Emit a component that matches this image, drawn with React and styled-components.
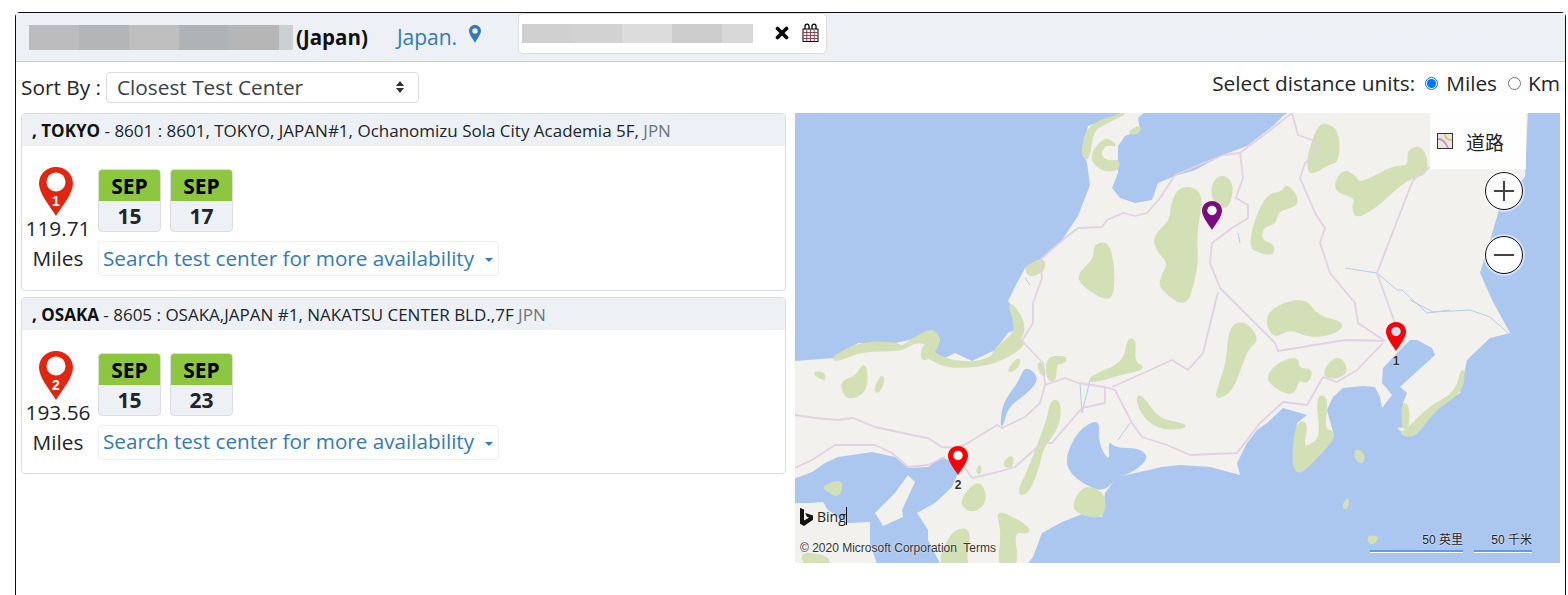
import React from 'react';
import styled, { createGlobalStyle } from 'styled-components';

const Global = createGlobalStyle`
  html, body { margin: 0; padding: 0; background: #fff; }
  body { font-family: "Open Sans", "Noto Sans", Arial, sans-serif; color: #212529; }
  * { box-sizing: border-box; }
`;

const Page = styled.div`
  width: 1568px;
  height: 595px;
  padding: 12px 2px 0 15px;
  overflow: hidden;
`;

const Frame = styled.div`
  height: 600px;
  border: 1.5px solid #111;
  border-bottom: none;
  border-radius: 5px 5px 0 0;
`;

const Header = styled.div`
  height: 49px;
  background: #edf1f5;
  border-bottom: 1px solid #ccd0d4;
  display: flex;
  align-items: flex-start;
  padding-left: 13px;
`;

const Redacted = styled.div`
  display: flex;
  margin-top: ${(p) => p.$top}px;
  height: ${(p) => p.$h}px;
`;

const Blur = styled.span`
  width: ${(p) => p.$w}px;
  background: ${(p) => p.$c};
`;

const CountryName = styled.span`
  font-size: 20.5px;
  font-weight: 700;
  line-height: 26px;
  margin: 11px 0 0 3px;
  color: #111;
`;

const CountryLink = styled.a`
  font-size: 21px;
  line-height: 26px;
  color: #337ab7;
  margin: 11px 0 0 29px;
`;

const PinLink = styled.svg`
  width: 12px;
  height: 18px;
  margin: 12px 0 0 12px;
`;

const DateBox = styled.div`
  width: 309px;
  height: 41px;
  margin: 0 0 0 37px;
  background: #fff;
  border: 1px solid #ddd;
  border-radius: 5px;
  display: flex;
  align-items: flex-start;
  padding-left: 3px;
`;

const ClearIcon = styled.svg`
  width: 14px;
  height: 14px;
  margin: 12px 0 0 22px;
`;

const CalendarIcon = styled.svg`
  width: 17px;
  height: 19px;
  margin: 9px 0 0 13px;
`;

const Toolbar = styled.div`
  display: flex;
  justify-content: space-between;
  height: 51px;
  padding: 10px 5px 0 5px;
`;

const SortGroup = styled.div`
  display: flex;
  align-items: center;
  height: 31px;
`;

const Label = styled.span`
  font-size: 20.8px;
  line-height: 31px;
  color: #212529;
`;

const SortSelect = styled.div`
  width: 313px;
  height: 31px;
  margin-left: 5px;
  border: 1px solid #ddd;
  border-radius: 4px;
  padding: 0 13px 2px 10px;
  display: flex;
  align-items: center;
  justify-content: space-between;
  font-size: 20.8px;
  color: #3b4147;
`;

const UnitsGroup = styled.div`
  display: flex;
  align-items: center;
  height: 22px;
`;

const Radio = styled.span`
  width: 13px;
  height: 13px;
  border-radius: 50%;
  margin: 0 ${(p) => p.$after}px 0 ${(p) => p.$gap}px;
  background: #fff;
  border: 1px solid ${(p) => (p.$on ? '#0075ff' : '#767676')};
  display: flex;
  align-items: center;
  justify-content: center;
  &::after {
    content: '';
    width: 9px;
    height: 9px;
    border-radius: 50%;
    background: ${(p) => (p.$on ? '#0075ff' : 'transparent')};
  }
`;

const Content = styled.div`
  display: grid;
  grid-template-columns: 765px 765px;
  column-gap: 9px;
  padding-left: 5px;
`;

const List = styled.div`
  display: flex;
  flex-direction: column;
  gap: 6px;
`;

const Card = styled.div`
  height: 177.5px;
  border: 1px solid #ddd;
  border-radius: 4px;
  overflow: hidden;
`;

const CardTitle = styled.div`
  height: 32px;
  background: #edf1f5;
  padding-left: 10px;
  font-size: 17px;
  line-height: 34px;
  color: #212529;
  white-space: nowrap;
  b { color: #111; }
  span { color: #6c757d; }
`;

const CardBody = styled.div`
  display: flex;
  padding: 21px 0 0 5px;
`;

const Distance = styled.div`
  width: 62px;
  margin-right: 9px;
  display: flex;
  flex-direction: column;
  align-items: center;
  font-size: 20.8px;
  line-height: 30px;
  color: #212529;
  white-space: nowrap;
  svg { width: 34px; height: 49px; margin: 0 4px -3px 0; }
`;

const Slots = styled.div`
  display: flex;
  flex-direction: column;
  gap: 9px;
  padding-top: 2px;
`;

const Tiles = styled.div`
  display: flex;
  gap: 9px;
`;

const Tile = styled.div`
  width: 63px;
  height: 63px;
  border: 1px solid #ddd;
  border-radius: 4px;
  background: #edf1f5;
  overflow: hidden;
  text-align: center;
  font-weight: 700;
  font-size: 21px;
  color: #212529;
`;

const TileMonth = styled.div`
  height: 31px;
  background: #8dc63f;
  color: #000;
  line-height: 33px;
`;

const TileDay = styled.div`
  line-height: 30px;
`;

const MoreButton = styled.div`
  width: 401px;
  height: 35px;
  border: 1px solid #eee;
  border-radius: 4px;
  padding: 0 5px 2px 4px;
  display: flex;
  align-items: center;
  justify-content: space-between;
  font-size: 20.7px;
  color: #337ab7;
  white-space: nowrap;
  &::after {
    content: '';
    border-left: 4px solid transparent;
    border-right: 4px solid transparent;
    border-top: 4px solid #337ab7;
    margin-top: 5px;
  }
`;

const MapBox = styled.div`
  position: relative;
  width: 765px;
  height: 450px;
  background: #abc7f0;
  overflow: hidden;
  svg.base { display: block; filter: blur(0.4px); }
`;

const LayerButton = styled.div`
  position: absolute;
  top: 0;
  right: 34px;
  width: 96px;
  height: 56px;
  background: rgba(255, 255, 255, 0.92);
  display: flex;
  align-items: center;
  padding-left: 7px;
  gap: 13px;
  font-family: "Noto Sans CJK SC", sans-serif;
  font-size: 19px;
  color: #222;
`;

const ZoomButton = styled.div`
  position: absolute;
  left: 690px;
  top: ${(p) => p.$top}px;
  width: 38px;
  height: 38px;
  border-radius: 50%;
  background: #fff;
  border: 1.5px solid #111;
  box-shadow: 0 0 0 2px rgba(255, 255, 255, 0.45);
  display: flex;
  align-items: center;
  justify-content: center;
`;

const Marker = styled.svg`
  position: absolute;
  left: ${(p) => p.$x}px;
  top: ${(p) => p.$y}px;
  width: 20px;
  height: 29px;
`;

const MarkerLabel = styled.span`
  position: absolute;
  left: ${(p) => p.$x}px;
  top: ${(p) => p.$y}px;
  width: 20px;
  text-align: center;
  font-family: "Liberation Sans", Arial, sans-serif;
  font-size: 12px;
  font-weight: 700;
  line-height: 14px;
  color: #333;
  text-shadow: 0 0 2px #fff;
`;

const BingMark = styled.div`
  position: absolute;
  left: 5px;
  top: 394px;
  display: flex;
  align-items: center;
  gap: 4px;
  font-family: "Open Sans", sans-serif;
  font-size: 14px;
  color: #222;
  &::after {
    content: '';
    position: absolute;
    right: -1px;
    top: 0;
    height: 18px;
    width: 1px;
    background: #111;
  }
`;

const Copyright = styled.div`
  position: absolute;
  left: 5px;
  top: 428px;
  font-family: "Liberation Sans", Arial, sans-serif;
  font-size: 12px;
  line-height: 14px;
  color: #333;
  text-shadow: 0 0 2px #fff;
  white-space: pre;
`;

const Scale = styled.div`
  position: absolute;
  left: ${(p) => p.$x}px;
  top: 419px;
  width: ${(p) => p.$w}px;
  height: 20px;
  border-bottom: 2px solid #5a9cf0;
  box-shadow: 0 1px 0 #fff;
  text-align: right;
  font-family: "Liberation Sans", "Noto Sans CJK SC", sans-serif;
  font-size: 12px;
  line-height: 17px;
  color: #222;
  text-shadow: 0 0 2px #fff;
`;

const land = [
  '0,248 40,245 63,230 100,230 115,227 137,217 145,227 138,240 150,245 160,240 177,248 200,237 213,220 220,217 227,207 213,188 222,170 230,155 245,147 267,127 283,103 295,72 292,50 287,38 293,13 325,2 330,-4 353,-4 343,5 345,17 330,23 323,33 323,60 317,75 325,85 340,90 357,87 363,70 380,63 400,57 428,42 452,33 478,13 488,3 498,-4 733,-4 730,64 705,90 702,104 685,160 697,187 715,220 695,225 672,247 665,280 638,297 620,322 608,320 602,315 612,314 608,290 612,280 605,274 618,262 640,242 637,235 622,227 615,227 605,237 588,255 587,270 597,282 587,295 585,284 580,274 568,273 548,275 538,284 532,297 538,319 530,330 512,354 502,359 498,347 502,310 512,302 488,295 472,310 462,317 452,330 442,350 445,362 415,354 385,352 367,354 322,364 310,380 307,404 290,400 267,409 247,420 238,444 230,454 147,454 133,427 133,417 122,400 140,390 157,374 163,360 157,349 147,344 133,354 113,355 100,344 77,339 43,344 30,350 17,359 -4,367 -4,248',
  '-4,390 15,390 28,389 33,397 53,410 75,409 75,430 83,454 -4,454',
  '113,362 120,369 107,397 108,404 88,413 80,400 100,380'
];

const water = [
  '270,345 283,317 305,305 303,330 315,350 313,327 320,335 345,335 354,345 340,358 322,365 308,379 290,372 275,360',
  '230,252 245,265 233,280 213,294 208,314 205,312 208,289 223,270'
];

const green = [
  '358,125 377,107 377,90 387,73 408,80 400,120 402,147 398,170 390,193 368,177 365,168 375,150 365,140',
  '418,70 428,62 438,72 432,97 418,87',
  '453,133 470,83 488,80 492,72 502,85 500,93 482,97 480,110 467,113 465,128 478,132 478,140 468,140',
  '282,163 300,147 300,132 313,130 318,153 318,177 313,187 292,175',
  '513,47 520,22 528,10 543,18 543,48 533,50 515,62',
  '538,77 548,57 560,64 565,72 598,54 615,54 613,37 628,34 633,60 615,64 598,77 585,90 562,105 558,94 562,84',
  '470,200 508,184 522,204 548,210 542,219 515,224 495,214 478,225',
  '435,214 450,209 463,227 452,234 437,277 423,285 422,280 433,250',
  '472,265 482,252 502,244 503,257 517,257 512,270 503,265 498,282 482,275',
  '527,262 542,242 553,257 542,265',
  '342,284 347,284 363,307 390,312 387,315 363,315 347,300',
  '522,284 532,284 528,317 538,319 537,327 512,354 502,360 498,347 502,310 512,310 507,334 515,334 527,324',
  '668,252 668,277 638,297 620,324 605,320 612,318 635,294 662,280',
  '608,290 613,294 613,314 608,315',
  '287,40 293,13 325,2 330,0 310,10 297,17 293,48',
  '298,40 310,25 322,33 310,30 303,43 315,50 323,47 323,57 308,57 298,48',
  '333,20 345,13 343,20',
  '37,245 65,230 100,230 107,235 117,227 137,216 145,227 138,240 128,248 127,237 133,230 120,228 107,237 67,237 43,247',
  '230,155 245,147 250,150 247,158 235,163',
  '213,187 228,207 228,225 200,247 195,250 200,237 215,225 222,215',
  '127,240 137,227 143,227 135,240 160,250 187,250 213,235 223,227 227,227 227,234 200,250 167,254 147,252',
  '45,270 62,264 70,249 72,277 53,287',
  '18,260 28,260 30,267',
  '80,277 87,262 88,270 83,279',
  '212,259 225,244 222,255',
  '252,245 270,244 270,249 260,250 260,267 253,267',
  '243,250 247,252 250,262 246,260',
  '295,265 330,250 333,227 340,227 338,250 350,255 327,260 297,269',
  '257,287 265,290 263,314 247,334 243,354 232,381 223,380 233,360 243,334 253,307',
  '165,390 180,370 188,374 190,390 177,399',
  '203,402 208,400 233,414 233,420 217,417 223,454 203,454 208,420',
  '147,440 160,417 175,417 170,444 173,454 147,454',
  '277,394 290,372 310,382 308,404 290,402',
  '28,374 48,367 43,384 33,377',
  '208,352 217,342 217,354',
  '182,359 185,352 185,360',
  '5,440 33,444 33,454 13,454',
  '560,337 568,340 568,350 562,347',
  '548,394 553,385 552,395',
  '573,424 582,424 580,429 575,430'
];

const roads = [
  '245,147 270,125 283,115 307,114 312,107 328,100 340,103 352,100 365,85 380,62 428,42 445,40 478,15 497,0',
  '497,0 503,22 520,28 522,40 510,50 505,65 520,100 530,115 525,130 535,160 560,190 563,210 590,228',
  '445,40 448,65 441,85 453,92 453,105 437,115 417,130 415,150 425,175 480,230 483,238 550,227 590,228',
  '245,147 247,165 238,190 238,210 227,228 248,250 250,272 245,290 230,304 207,315 202,312 173,330 163,335',
  '0,302 20,305 43,307 58,305 80,314 117,322 133,325 147,334 163,335',
  '0,355 17,347 40,332 80,332 97,340 113,354 133,352 150,344',
  '170,355 177,365 203,359 220,354 247,330 257,330 287,295 310,290 310,274 283,270 270,265 250,272',
  '310,274 320,277 337,310 347,324 372,332 395,342 442,340 465,310 488,289 512,292 528,264 542,269 562,257 588,230',
  '317,274 333,267 377,247 393,257 408,240 423,179',
  '635,54 618,67 592,134 582,160 588,177 600,210'
];

const rivers = [
  '550,155 582,160 602,177 607,177 632,200 655,197',
  '615,187 638,199 675,197 695,204 713,220',
  '285,270 287,300',
  '295,267 287,300',
  '323,327 335,310',
  '443,120 445,130',
  '230,165 235,172'
];

// rounds the hand traced outlines so they read like map tiles
const smooth = (points) => {
  const pts = points.split(' ').map((p) => p.split(',').map(Number));
  const mid = (a, b) => [(a[0] + b[0]) / 2, (a[1] + b[1]) / 2];
  const start = mid(pts[pts.length - 1], pts[0]);
  let d = `M${start[0]} ${start[1]}`;
  pts.forEach((p, i) => {
    const m = mid(p, pts[(i + 1) % pts.length]);
    d += `Q${p[0]} ${p[1]} ${m[0]} ${m[1]}`;
  });
  return d + 'Z';
};

const MapDrawing = () => (
  <svg className="base" width="765" height="450" viewBox="0 0 765 450">
    {land.map((p) => <polygon key={p} points={p} fill="#f2f1ed" strokeLinejoin="round" />)}
    {water.map((p) => <path key={p} d={smooth(p)} fill="#abc7f0" />)}
    {green.map((p) => <path key={p} d={smooth(p)} fill="#d3dfb5" stroke="#d3dfb5" strokeWidth="3" strokeLinejoin="round" />)}
    {rivers.map((p) => <polyline key={p} points={p} fill="none" stroke="#b4cdf0" strokeWidth="1" />)}
    {roads.map((p) => <polyline key={p} points={p} fill="none" stroke="#e2d0e4" strokeWidth="1.8" strokeLinejoin="round" />)}
  </svg>
);

const PIN = 'M17 0C7.6 0 0 7.4 0 16.6c0 9.6 10.6 22.6 17 32.4 6.4-9.8 17-22.8 17-32.4C34 7.4 26.4 0 17 0z';

const CardPin = ({ n }) => (
  <svg viewBox="0 0 34 49">
    <path d={PIN} fill="#e32510" />
    <circle cx="17" cy="15" r="9.5" fill="#fff" />
    <text x="17" y="39" textAnchor="middle" fontFamily="Liberation Sans, sans-serif" fontWeight="700" fontSize="14" fill="#fff">{n}</text>
  </svg>
);

const MapPin = ({ x, y, color, hole = '#fff', n }) => (
  <>
    <Marker $x={x} $y={y} viewBox="0 0 34 49">
      <path d={PIN} fill={color} />
      <circle cx="17" cy="16" r="8" fill={hole} />
    </Marker>
    {n && <MarkerLabel $x={x} $y={y + 32}>{n}</MarkerLabel>}
  </>
);

const tests = [
  { id: 1, city: ', TOKYO', text: ' - 8601 : 8601, TOKYO, JAPAN#1, Ochanomizu Sola City Academia 5F, ', dist: '119.71', days: [15, 17] },
  { id: 2, city: ', OSAKA', text: ' - 8605 : OSAKA,JAPAN #1, NAKATSU CENTER BLD.,7F ', dist: '193.56', days: [15, 23] }
];

export default function App() {
  return (
    <Page>
      <Global />
      <Frame>
        <Header>
          <Redacted $top={12} $h={25}>
            {[['#bcbcbe', 50], ['#b4b5b7', 50], ['#bfbfc0', 50], ['#b0b3b5', 50], ['#b6b6b7', 50], ['#cbd0d0', 14]].map(([c, w], i) => (
              <Blur key={i} $c={c} $w={w} />
            ))}
          </Redacted>
          <CountryName>(Japan)</CountryName>
          <CountryLink>Japan.</CountryLink>
          <PinLink viewBox="0 0 12 18">
            <path fillRule="evenodd" fill="#337ab7" d="M6 0C2.7 0 0 2.6 0 5.8 0 9.4 4.2 14.6 6 18c1.8-3.4 6-8.6 6-12.2C12 2.6 9.3 0 6 0zm0 3.2a2.7 2.7 0 1 1 0 5.4 2.7 2.7 0 0 1 0-5.4z" />
          </PinLink>
          <DateBox>
            <Redacted $top={10} $h={19}>
              {[['#d0d0d0', 50], ['#d2d2d2', 50], ['#dcdcdc', 50], ['#cccccc', 50], ['#d8d8d8', 31]].map(([c, w], i) => (
                <Blur key={i} $c={c} $w={w} />
              ))}
            </Redacted>
            <ClearIcon viewBox="0 0 14 14">
              <path d="M2.5 2.5l9 9M11.5 2.5l-9 9" stroke="#000" strokeWidth="3.6" strokeLinecap="round" />
            </ClearIcon>
            <CalendarIcon viewBox="0 0 17 19">
              <path d="M3 6V3.2a2 2 0 0 1 4 0V6M10 6V3.2a2 2 0 0 1 4 0V6" fill="#fff" stroke="#000" strokeWidth="1.3" />
              <rect x="1" y="6" width="15" height="12.5" fill="#fff" stroke="#000" />
              <path d="M1 9.5h15M1 12.5h15M1 15.5h15M4.8 6.5v12M8.5 6.5v12M12.2 6.5v12" stroke="#8a3048" strokeWidth="0.9" />
            </CalendarIcon>
          </DateBox>
        </Header>
        <Toolbar>
          <SortGroup>
            <Label>Sort By :</Label>
            <SortSelect>
              Closest Test Center
              <svg width="10" height="14" viewBox="0 0 10 14">
                <path d="M5 1l4 5H1zM5 13L1 8h8z" fill="#333" />
              </svg>
            </SortSelect>
          </SortGroup>
          <UnitsGroup>
            <Label>Select distance units:</Label>
            <Radio $on $gap={10} $after={8} />
            <Label>Miles</Label>
            <Radio $gap={11} $after={7} />
            <Label>Km</Label>
          </UnitsGroup>
        </Toolbar>
        <Content>
          <List>
            {tests.map((t) => (
              <Card key={t.id}>
                <CardTitle><b>{t.city}</b>{t.text}<span>JPN</span></CardTitle>
                <CardBody>
                  <Distance>
                    <CardPin n={t.id} />
                    <div>{t.dist}</div>
                    <div>Miles</div>
                  </Distance>
                  <Slots>
                    <Tiles>
                      {t.days.map((d) => (
                        <Tile key={d}>
                          <TileMonth>SEP</TileMonth>
                          <TileDay>{d}</TileDay>
                        </Tile>
                      ))}
                    </Tiles>
                    <MoreButton>Search test center for more availability</MoreButton>
                  </Slots>
                </CardBody>
              </Card>
            ))}
          </List>
          <MapBox>
            <MapDrawing />
            <MapPin x={407} y={88} color="#7c0a80" />
            <MapPin x={591} y={209} color="#fb0007" hole="#cfe0f2" n="1" />
            <MapPin x={153} y={333} color="#fb0007" n="2" />
            <LayerButton>
              <svg width="16" height="16" viewBox="0 0 16 16">
                <rect x="0.5" y="0.5" width="15" height="15" fill="#ece7dc" stroke="#333" />
                <path d="M1 6c5 0 8 4 10 9" stroke="#b79acb" strokeWidth="2" fill="none" />
                <path d="M8 1c0 4 3 6 7 6" stroke="#e0b46c" strokeWidth="1.4" fill="none" />
              </svg>
              道路
            </LayerButton>
            <ZoomButton $top={59}>
              <svg width="24" height="24" viewBox="0 0 24 24"><path d="M12 2v20M2 12h20" stroke="#444" strokeWidth="2" /></svg>
            </ZoomButton>
            <ZoomButton $top={123}>
              <svg width="24" height="24" viewBox="0 0 24 24"><path d="M2 12h20" stroke="#444" strokeWidth="2" /></svg>
            </ZoomButton>
            <BingMark>
              <svg width="13" height="18" viewBox="0 0 13 18">
                <path d="M0 0l4 1.4v11.2l5-2.9-2.3-1.1-1.4-3.6L13 7.6v4.1L4 18l-4-2.2z" fill="#111" />
              </svg>
              Bing
            </BingMark>
            <Copyright>© 2020 Microsoft Corporation  Terms</Copyright>
            <Scale $x={575} $w={93}>50 英里</Scale>
            <Scale $x={679} $w={58}>50 千米</Scale>
          </MapBox>
        </Content>
      </Frame>
    </Page>
  );
}
